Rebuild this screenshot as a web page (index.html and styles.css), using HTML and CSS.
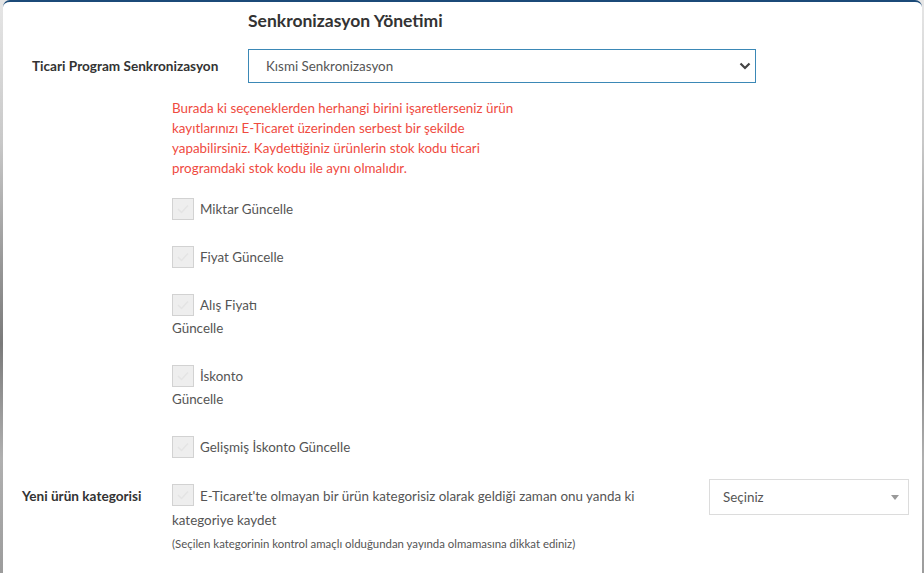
FILE: index.html
```html
<!DOCTYPE html>
<html lang="tr">
<head>
<meta charset="utf-8">
<link rel="stylesheet" href="styles.css">
</head>
<body>
<div class="modal">
  <h2 class="title">Senkronizasyon Yönetimi</h2>
  <div class="row-sync">
    <label class="lbl lbl-sync">Ticari Program Senkronizasyon</label>
    <div class="select select-sync">
      <span>Kısmi Senkronizasyon</span>
      <svg class="chev" width="12" height="8" viewBox="0 0 12 8"><path d="M1.5 1.5 L6 6 L10.5 1.5" fill="none" stroke="#444" stroke-width="2.2"/></svg>
    </div>
  </div>
  <p class="note">Burada ki seçeneklerden herhangi birini işaretlerseniz ürün kayıtlarınızı E-Ticaret üzerinden serbest bir şekilde yapabilirsiniz. Kaydettiğiniz ürünlerin stok kodu ticari programdaki stok kodu ile aynı olmalıdır.</p>
  <div class="checks">
    <div class="item"><span class="cb"><svg width="14" height="12" viewBox="0 0 14 12"><path d="M2 6 L5.5 9.5 L12 2.5" fill="none" stroke="#e4e4e4" stroke-width="1.5"/></svg></span>Miktar Güncelle</div>
    <div class="item"><span class="cb"><svg width="14" height="12" viewBox="0 0 14 12"><path d="M2 6 L5.5 9.5 L12 2.5" fill="none" stroke="#e4e4e4" stroke-width="1.5"/></svg></span>Fiyat Güncelle</div>
    <div class="item"><span class="cb"><svg width="14" height="12" viewBox="0 0 14 12"><path d="M2 6 L5.5 9.5 L12 2.5" fill="none" stroke="#e4e4e4" stroke-width="1.5"/></svg></span>Alış Fiyatı<br>Güncelle</div>
    <div class="item"><span class="cb"><svg width="14" height="12" viewBox="0 0 14 12"><path d="M2 6 L5.5 9.5 L12 2.5" fill="none" stroke="#e4e4e4" stroke-width="1.5"/></svg></span>İskonto<br>Güncelle</div>
    <div class="item"><span class="cb"><svg width="14" height="12" viewBox="0 0 14 12"><path d="M2 6 L5.5 9.5 L12 2.5" fill="none" stroke="#e4e4e4" stroke-width="1.5"/></svg></span>Gelişmiş İskonto Güncelle</div>
  </div>
  <div class="row-cat">
    <label class="lbl lbl-cat">Yeni ürün kategorisi</label>
    <div class="cat-body">
      <div class="cat-text"><span class="cb"><svg width="14" height="12" viewBox="0 0 14 12"><path d="M2 6 L5.5 9.5 L12 2.5" fill="none" stroke="#e4e4e4" stroke-width="1.5"/></svg></span>E-Ticaret'te olmayan bir ürün kategorisiz olarak geldiği zaman onu yanda ki<br>kategoriye kaydet</div>
      <div class="small">(Seçilen kategorinin kontrol amaçlı olduğundan yayında olmamasına dikkat ediniz)</div>
    </div>
    <div class="select select-cat">
      <span>Seçiniz</span>
      <svg class="tri" width="8" height="5" viewBox="0 0 8 5"><path d="M0 0 L8 0 L4 5 Z" fill="#999"/></svg>
    </div>
  </div>
</div>
</body>
</html>
```

FILE: styles.css
```css
html, body {
  margin: 0;
  padding: 0;
  height: 100%;
}
body {
  background: linear-gradient(180deg, #e6e6e6 0%, #c8c8c8 25%, #9a9a9a 45%, #7a7a7a 60%, #b0b0b0 80%, #9c9c9c 100%);
  font-family: Lato, "Open Sans", sans-serif;
  color: #555;
  overflow: hidden;
}
.modal {
  margin-left: 3px;
  width: 919px;
  height: 100%;
  background: #fff;
  border-top: 2px solid #1b4a78;
  border-radius: 7px 7px 0 0;
  box-sizing: border-box;
}
.title {
  margin: 0;
  padding: 9px 0 0 245px;
  font-size: 17.5px;
  line-height: 20px;
  font-weight: 700;
  color: #333;
}
.row-sync {
  display: flex;
  align-items: center;
  margin-top: 18px;
}
.lbl {
  font-weight: 700;
  font-size: 13.6px;
  color: #333;
}
.lbl-sync {
  width: 245px;
  flex-shrink: 0;
  padding-left: 29px;
  box-sizing: border-box;
}
.select {
  display: flex;
  align-items: center;
  justify-content: space-between;
  box-sizing: border-box;
  background: #fff;
  font-size: 13.4px;
  color: #555;
}
.select-sync {
  width: 508px;
  height: 34px;
  border: 1px solid #3b88b6;
  padding: 0 4px 0 17px;
}
.note {
  margin: 15px 0 0 169px;
  width: 360px;
  font-size: 13.4px;
  line-height: 20px;
  color: #ef4b3f;
}
.checks {
  margin: 20px 0 0 169px;
  display: flex;
  flex-direction: column;
  gap: 25px;
}
.item, .cat-text {
  font-size: 13.4px;
  line-height: 23px;
  color: #555;
}
.cb {
  display: inline-flex;
  align-items: center;
  justify-content: center;
  width: 22px;
  height: 22px;
  box-sizing: border-box;
  background: #eee;
  border: 1px solid #d2d2d2;
  vertical-align: top;
  margin-right: 6px;
}
.row-cat {
  display: flex;
  align-items: flex-start;
  margin-top: 25px;
}
.lbl-cat {
  width: 169px;
  flex-shrink: 0;
  padding-left: 19px;
  box-sizing: border-box;
  line-height: 23px;
  padding-top: 1px;
}
.cat-body {
  width: 537px;
  flex-shrink: 0;
}
.cat-text {
  line-height: 24px;
}
.small {
  font-size: 11.4px;
  line-height: 23px;
  color: #555;
}
.select-cat {
  width: 200px;
  height: 36px;
  border: 1px solid #dcdcdc;
  padding: 0 9px 0 13px;
  margin-top: -5px;
}
```
